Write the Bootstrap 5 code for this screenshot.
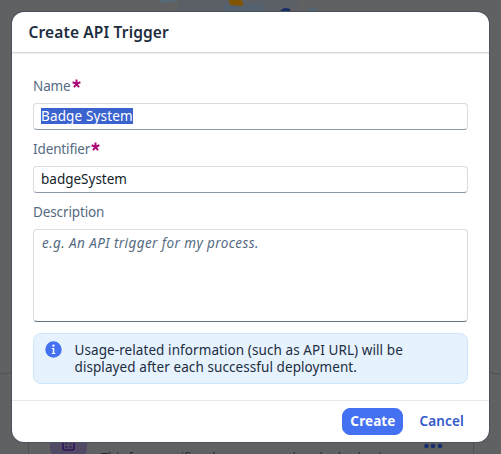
<!DOCTYPE html>
<html lang="en">
<head>
<meta charset="utf-8">
<meta name="viewport" content="width=device-width, initial-scale=1">
<title>Create API Trigger</title>
<link href="https://cdn.jsdelivr.net/npm/bootstrap@5.3.0/dist/css/bootstrap.min.css" rel="stylesheet">
<style>
body{font-family:"Noto Sans","Open Sans",sans-serif;font-size:13.5px;line-height:18px;color:#1d2d3e;background:#606163;height:454px;overflow:hidden}
.backdrop-art{position:absolute;inset:0;width:501px;height:454px}
.stage{position:relative;padding:12px 12px 0}
.dialog-box{height:430px;border-radius:12px;box-shadow:0 0 0 1px #49525f;overflow:hidden}
.dialog-head{height:41px;padding:0 16.5px;border-bottom:1px solid #d5d7da;box-shadow:0 1px 1px #eee}
.dialog-title{font-size:15.5px;line-height:20px;font-weight:600;margin:0;letter-spacing:.14px}
.dialog-main{height:347px;padding:23px 21px 0}
.field-label{display:flex;height:20px;line-height:20px;color:#556b82;margin-bottom:7px;letter-spacing:-.12px}
.t{display:inline-block;white-space:nowrap}
.req{width:9px;height:9px;margin:3px 0 0 1px}
.field{height:27px;padding:0 7px 2px;border:1px solid #d9dce3;border-bottom-color:#8d98aa;border-radius:4px;margin-bottom:9px;color:#131e29}
.field-area{height:93px;padding:4px 8px;margin-bottom:11px;color:#556b82;font-style:italic;letter-spacing:.41px;border-bottom-color:#667286}
.picked{background:#3b63d0;color:#fff;line-height:16px;height:16px;letter-spacing:.15px}
.note{height:51px;border:1px solid #cbe5fb;border-radius:8px;background:#e6f2fe;padding:8px 11px;line-height:17px;letter-spacing:.08px}
.note svg{margin:-1px 12.5px 0 0}
.dialog-foot{height:42px;border-top:1px solid #e9e9ec;padding:0 17px}
.action{height:27px;border-radius:8px;padding:0 7px;font-size:13.5px;line-height:25px;font-weight:700;letter-spacing:.1px;border:1px solid #4470f2;background:#4470f2;color:#fff}
.action-plain{background:none;border-color:transparent;color:#3459cc;font-weight:600;letter-spacing:.15px}
</style>
</head>
<body>
<svg class="backdrop-art" viewBox="0 0 501 454" aria-hidden="true">
<path d="M0 374Q8 374 12 372M501 374Q493 374 489 372" stroke="#505154" fill="none"/>
<path d="M160 0H178Q170 4 161 3Z" fill="#566a76"/><path d="M178 0H299L296 12H178Z" fill="#5b5f66"/>
<path d="M224 4H263V12H224Z" fill="#53606e"/><path d="M229 0H242L243 6L230 5Z" fill="#835400"/>
<circle cx="286" cy="15" r="7" fill="#182c66"/><path d="M290 10L298 12H290Z" fill="#80592c"/><circle cx="313" cy="12" r="5" fill="#536570"/>
<path d="M28.500 441V454M473.500 441V454" stroke="#505154"/>
<rect x="50" y="424" width="37" height="33" rx="8" fill="#514a65"/>
<path d="M63 437V448Q63 450 65 450H72Q74 450 74 448V437" fill="none" stroke="#30145b" stroke-width="1.600"/><path d="M65.500 443h2m2 0h2m-6 4h2m2 0h2" stroke="#30145b" stroke-width="1.500"/>
<g fill="#172d70"><circle cx="426.500" cy="446" r="2.300"/><circle cx="433" cy="446" r="2.300"/><circle cx="440" cy="446" r="2.300"/></g>
<text x="101" y="462" font-size="13" textLength="287" fill="#252c35">This form notifies the manager that the badge is</text>
</svg>
<svg class="d-none"><symbol id="star" viewBox="0 0 9 9"><path d="M4.500 4.700V.4M4.500 4.700L.6 3.300M4.500 4.700L8.400 3.300M4.500 4.700L2 8.300M4.500 4.700L7 8.300" stroke="#aa0876" stroke-width="2" fill="none"/></symbol></svg>
<main class="stage">
<section class="dialog-box bg-white d-flex flex-column" role="dialog" aria-labelledby="title">
<header class="dialog-head d-flex align-items-center flex-shrink-0"><h1 class="dialog-title"><span class="t" id="title">Create API Trigger</span></h1></header>
<div class="dialog-main">
<div class="field-label"><span class="t">Name</span><svg class="req"><use href="#star"/></svg></div>
<div class="field d-flex align-items-center"><span class="t picked">Badge System</span></div>
<div class="field-label"><span class="t">Identifier</span><svg class="req"><use href="#star"/></svg></div>
<div class="field d-flex align-items-center"><span class="t">badgeSystem</span></div>
<div class="field-label"><span class="t">Description</span></div>
<div class="field field-area"><span class="t">e.g. An API trigger for my process.</span></div>
<div class="note d-flex"><svg class="flex-shrink-0" width="17" height="17" viewBox="0 0 17 17"><circle cx="8.500" cy="8.500" r="8.200" fill="#4470f2"/><circle cx="8.500" cy="4.600" r="1.200" fill="#fff"/><path d="M6.800 7h2.500v5h1v1H6.800v-1h1V8h-1Z" fill="#fff"/></svg><div><span class="t">Usage-related information (such as API URL) will be</span><br><span class="t">displayed after each successful deployment.</span></div></div>
</div>
<footer class="dialog-foot d-flex justify-content-end align-items-center gap-2"><button class="action btn">Create</button><button class="action action-plain btn">Cancel</button></footer>
</section>
</main>
<script src="https://cdn.jsdelivr.net/npm/bootstrap@5.3.0/dist/js/bootstrap.bundle.min.js"></script>
</body>
</html>
